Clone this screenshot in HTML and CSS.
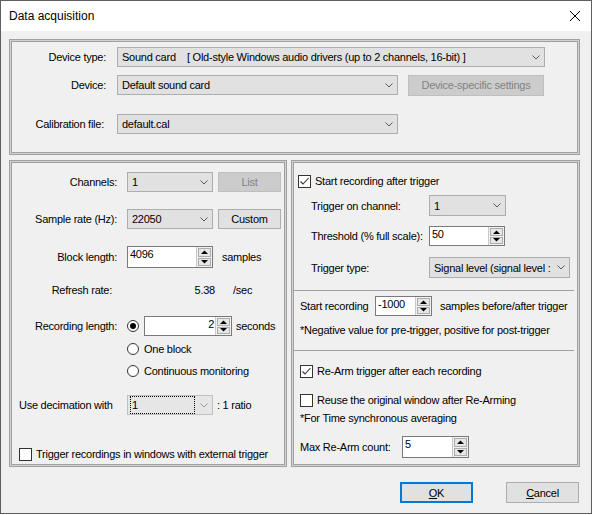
FILE: index.html
```html
<!DOCTYPE html>
<html>
<head>
<meta charset="utf-8">
<link rel="stylesheet" href="styles.css">
</head>
<body>
<div class="window">
  <div class="titlebar">
    <span class="title">Data acquisition</span>
    <svg class="close" width="12" height="12" viewBox="0 0 12 12"><path d="M1 1L11 11M11 1L1 11" stroke="#000" stroke-width="1" fill="none"/></svg>
  </div>
  <div class="content">
    <div class="group top">
      <div class="row r1">
        <span class="tlbl">Device type:</span>
        <div class="combo w-dt"><span class="ct pre">Sound card    [ Old-style Windows audio drivers (up to 2 channels, 16-bit) ]</span><svg class="chev" width="8" height="5" viewBox="0 0 8 5"><polyline points="0.5,0.5 4,4 7.5,0.5" /></svg></div>
      </div>
      <div class="row r2">
        <span class="tlbl">Device:</span>
        <div class="combo w-dev"><span class="ct">Default sound card</span><svg class="chev" width="8" height="5" viewBox="0 0 8 5"><polyline points="0.5,0.5 4,4 7.5,0.5" /></svg></div>
        <div class="btn dis dss">Device-specific settings</div>
      </div>
      <div class="row r3">
        <span class="tlbl cal">Calibration file:</span>
        <div class="combo w-dev"><span class="ct">default.cal</span><svg class="chev" width="8" height="5" viewBox="0 0 8 5"><polyline points="0.5,0.5 4,4 7.5,0.5" /></svg></div>
      </div>
    </div>

    <div class="panels">
      <div class="group left">
        <div class="row l-ch">
          <span class="lab">Channels:</span>
          <div class="combo w86"><span class="ct">1</span><svg class="chev" width="8" height="5" viewBox="0 0 8 5"><polyline points="0.5,0.5 4,4 7.5,0.5" /></svg></div>
          <div class="btn dis sbtn">List</div>
        </div>
        <div class="row l-sr">
          <span class="lab">Sample rate (Hz):</span>
          <div class="combo w86"><span class="ct">22050</span><svg class="chev" width="8" height="5" viewBox="0 0 8 5"><polyline points="0.5,0.5 4,4 7.5,0.5" /></svg></div>
          <div class="btn sbtn">Custom</div>
        </div>
        <div class="row l-bl">
          <span class="lab">Block length:</span>
          <div class="spin w86"><span class="sv">4096</span><div class="arr"><span class="ab"><svg width="7" height="4" viewBox="0 0 7 4"><polygon points="0,4 7,4 3.5,0.5"/></svg></span><span class="ab"><svg width="7" height="4" viewBox="0 0 7 4"><polygon points="0,0 7,0 3.5,3.5"/></svg></span></div></div>
          <span class="after9">samples</span>
        </div>
        <div class="row l-rr">
          <span class="lab rr">Refresh rate:</span>
          <span class="rval">5.38</span>
          <span class="rsec">/sec</span>
        </div>
        <div class="row l-rl">
          <span class="lab">Recording length:</span>
          <span class="radio on"></span>
          <div class="spin w88 ml5"><span class="sv r">2</span><div class="arr"><span class="ab"><svg width="7" height="4" viewBox="0 0 7 4"><polygon points="0,4 7,4 3.5,0.5"/></svg></span><span class="ab"><svg width="7" height="4" viewBox="0 0 7 4"><polygon points="0,0 7,0 3.5,3.5"/></svg></span></div></div>
          <span class="ml4">seconds</span>
        </div>
        <div class="row l-ob">
          <span class="radio"></span><span class="ml5">One block</span>
        </div>
        <div class="row l-cm">
          <span class="radio"></span><span class="ml5">Continuous monitoring</span>
        </div>
        <div class="row l-dec">
          <span class="declab">Use decimation with</span>
          <div class="combo w86 cdis"><span class="ct focus">1</span><svg class="chev" width="8" height="5" viewBox="0 0 8 5"><polyline points="0.5,0.5 4,4 7.5,0.5" /></svg></div>
          <span class="ml4">: 1 ratio</span>
        </div>
        <div class="row l-ext">
          <span class="check"></span><span class="ml4">Trigger recordings in windows with external trigger</span>
        </div>
      </div>

      <div class="group right">
        <div class="row r-st">
          <span class="check"><svg width="11" height="11" viewBox="0 0 11 11"><polyline points="1.5,5.5 4,8 9.5,2" /></svg></span><span class="ml4">Start recording after trigger</span>
        </div>
        <div class="row r-tc">
          <span class="rlab">Trigger on channel:</span>
          <div class="combo w77"><span class="ct">1</span><svg class="chev" width="8" height="5" viewBox="0 0 8 5"><polyline points="0.5,0.5 4,4 7.5,0.5" /></svg></div>
        </div>
        <div class="row r-th">
          <span class="rlab">Threshold (% full scale):</span>
          <div class="spin w76"><span class="sv">50</span><div class="arr"><span class="ab"><svg width="7" height="4" viewBox="0 0 7 4"><polygon points="0,4 7,4 3.5,0.5"/></svg></span><span class="ab"><svg width="7" height="4" viewBox="0 0 7 4"><polygon points="0,0 7,0 3.5,3.5"/></svg></span></div></div>
        </div>
        <div class="row r-tt">
          <span class="rlab">Trigger type:</span>
          <div class="combo w141"><span class="ct">Signal level (signal level :</span><svg class="chev" width="8" height="5" viewBox="0 0 8 5"><polyline points="0.5,0.5 4,4 7.5,0.5" /></svg></div>
        </div>
        <div class="sep"></div>
        <div class="row r-sr">
          <span class="srlab">Start recording</span>
          <div class="spin w57"><span class="sv">-1000</span><div class="arr"><span class="ab"><svg width="7" height="4" viewBox="0 0 7 4"><polygon points="0,4 7,4 3.5,0.5"/></svg></span><span class="ab"><svg width="7" height="4" viewBox="0 0 7 4"><polygon points="0,0 7,0 3.5,3.5"/></svg></span></div></div>
          <span class="ml8">samples before/after trigger</span>
        </div>
        <div class="row r-neg">
          <span>*Negative value for pre-trigger, positive for post-trigger</span>
        </div>
        <div class="sep"></div>
        <div class="row r-ra">
          <span class="check"><svg width="11" height="11" viewBox="0 0 11 11"><polyline points="1.5,5.5 4,8 9.5,2" /></svg></span><span class="ml4">Re-Arm trigger after each recording</span>
        </div>
        <div class="row r-ru">
          <span class="check"></span><span class="ml4">Reuse the original window after Re-Arming</span>
        </div>
        <div class="row r-ft">
          <span>*For Time synchronous averaging</span>
        </div>
        <div class="row r-mx">
          <span class="mxlab">Max Re-Arm count:</span>
          <div class="spin w67"><span class="sv">5</span><div class="arr"><span class="ab"><svg width="7" height="4" viewBox="0 0 7 4"><polygon points="0,4 7,4 3.5,0.5"/></svg></span><span class="ab"><svg width="7" height="4" viewBox="0 0 7 4"><polygon points="0,0 7,0 3.5,3.5"/></svg></span></div></div>
        </div>
      </div>
    </div>

    <div class="buttons">
      <div class="btn dlg ok"><span><u>O</u>K</span></div>
      <div class="btn dlg"><span><u>C</u>ancel</span></div>
    </div>
  </div>
</div>
</body>
</html>
```

FILE: styles.css
```css
* { box-sizing: border-box; }

body {
  margin: 0;
  background: #ffffff;
  font-family: "Liberation Sans", Arial, sans-serif;
  font-size: 11px;
  letter-spacing: -0.25px;
  color: #000;
}

.window {
  width: 592px;
  height: 514px;
  border: 1px solid #5f5f5f;
  background: #f0f0f0;
  display: flex;
  flex-direction: column;
}

.titlebar {
  height: 30px;
  flex: none;
  background: #fff;
  display: flex;
  align-items: center;
  justify-content: space-between;
  padding: 0 10px 0 8px;
}

.title {
  font-size: 12px;
  letter-spacing: 0;
}

.content {
  padding: 8px 11px 0 8px;
  display: flex;
  flex-direction: column;
}

.group {
  border: 1px solid #a0a0a0;
  box-shadow: inset 0 0 0 1px #d2d2d2, inset 0 0 0 2px #a0a0a0;
  display: flex;
  flex-direction: column;
}

.row {
  display: flex;
  align-items: center;
  flex: none;
  white-space: nowrap;
}

/* top group */
.top { height: 116px; padding-top: 7px; }
.top .row { height: 20px; }
.top .r2 { margin-top: 8px; }
.top .r3 { margin-top: 19px; }
.tlbl { width: 96px; text-align: right; margin-right: 11px; }
.tlbl.cal { padding-right: 2px; }

.combo {
  align-self: stretch;
  display: flex;
  align-items: center;
  background: #e1e1e1;
  border: 1px solid #adadad;
  padding: 0 4px 0 3px;
  overflow: hidden;
}
.combo .ct { flex: 1; overflow: hidden; padding-left: 1px; }
.combo .pre { white-space: pre; }
.chev { flex: none; fill: none; stroke: #5a5a5a; stroke-width: 1; }
.cdis { background: #e6e6e6; border-color: #bfbfbf; }
.cdis .chev { stroke: #9a9a9a; }
.focus {
  outline: 1px dotted #000;
  outline-offset: 0;
  margin: 1px 6px 1px 0;
  line-height: 14px;
  align-self: stretch;
  display: flex;
  align-items: center;
}

.w-dt { width: 428px; }
.w-dev { width: 281px; }
.w86 { width: 86px; }
.w88 { width: 88px; }
.w77 { width: 77px; }
.w76 { width: 76px; }
.w141 { width: 141px; }
.w57 { width: 57px; }
.w67 { width: 67px; }

.btn {
  display: flex;
  align-items: center;
  justify-content: center;
  background: #e1e1e1;
  border: 1px solid #adadad;
}
.btn.dis {
  background: #cccccc;
  border-color: #bfbfbf;
  color: #838383;
}
.dss { width: 136px; height: 21px; margin-left: 10px; }
.sbtn { width: 63px; align-self: stretch; margin-left: 5px; }

/* panels */
.panels {
  display: flex;
  gap: 4px;
  margin-top: 5px;
  height: 307px;
}
.left { width: 278px; padding-top: 11px; }
.right { width: 289px; padding-top: 12px; }

.lab { width: 107px; text-align: right; margin-right: 10px; }
.lab.rr { padding-right: 5px; }

.l-ch { height: 20px; }
.l-sr { height: 20px; margin-top: 17px; }
.l-bl { height: 22px; margin-top: 17px; }
.l-rr { height: 16px; margin-top: 14px; }
.l-rl { height: 20px; margin-top: 18px; }
.l-ob { height: 16px; margin-top: 5px; padding-left: 117px; }
.l-cm { height: 16px; margin-top: 6px; padding-left: 117px; }
.l-dec { height: 20px; margin-top: 16px; padding-left: 9px; }
.l-ext { height: 16px; margin-top: 31px; padding-left: 9px; }
.declab { width: 108px; }

.rval { width: 88px; text-align: right; }
.rsec { margin-left: 18px; }
.after9 { margin-left: 9px; }
.ml4 { margin-left: 4px; }
.ml5 { margin-left: 5px; }
.ml8 { margin-left: 8px; }

/* spin boxes */
.spin {
  align-self: stretch;
  display: flex;
  background: #fff;
  border: 1px solid #7a7a7a;
}
.spin .sv {
  flex: 1;
  padding: 1px 0 0 2px;
  line-height: 13px;
}
.spin .sv.r { text-align: right; padding-right: 1px; }
.arr {
  width: 16px;
  flex: none;
  display: flex;
  flex-direction: column;
  gap: 1px;
  padding: 1px 1px 1px 1px;
  background: #f0f0f0;
  border-left: 1px solid #c8c8c8;
}
.ab {
  flex: 1;
  background: #e6e6e6;
  border: 1px solid #adadad;
  display: flex;
  align-items: center;
  justify-content: center;
}
.ab svg { fill: #000; }

/* radio & checkbox */
.radio {
  width: 12px;
  height: 12px;
  flex: none;
  border-radius: 50%;
  border: 1px solid #333;
  background: #fff;
  display: flex;
  align-items: center;
  justify-content: center;
}
.radio.on::after {
  content: "";
  width: 6px;
  height: 6px;
  border-radius: 50%;
  background: #000;
}
.check {
  width: 13px;
  height: 13px;
  flex: none;
  border: 1px solid #333;
  background: #fff;
  display: flex;
  align-items: center;
  justify-content: center;
}
.check svg { fill: none; stroke: #333; stroke-width: 1.1; }

/* right panel */
.r-st { height: 16px; padding-left: 6px; }
.r-tc { height: 21px; margin-top: 6px; padding-left: 19px; }
.r-th { height: 20px; margin-top: 10px; padding-left: 19px; }
.r-tt { height: 21px; margin-top: 11px; padding-left: 19px; }
.rlab { width: 118px; }

.sep {
  height: 1px;
  flex: none;
  background: #a0a0a0;
  margin: 12px 5px 0 2px;
}

.r-sr { height: 20px; margin-top: 5px; padding-left: 8px; }
.srlab { width: 75px; }
.r-neg { height: 16px; margin-top: 6px; padding-left: 8px; }
.r-ra { height: 16px; margin-top: 12px; padding-left: 8px; }
.r-ru { height: 16px; margin-top: 13px; padding-left: 8px; }
.r-ft { height: 16px; margin-top: 2px; padding-left: 8px; }
.r-mx { height: 22px; margin-top: 10px; padding-left: 8px; }
.mxlab { width: 102px; }

/* dialog buttons */
.buttons {
  display: flex;
  justify-content: flex-end;
  gap: 33px;
  margin-top: 15px;
  padding-right: 1px;
}
.dlg { width: 73px; height: 21px; }
.ok { border: 2px solid #0078d7; }
```
